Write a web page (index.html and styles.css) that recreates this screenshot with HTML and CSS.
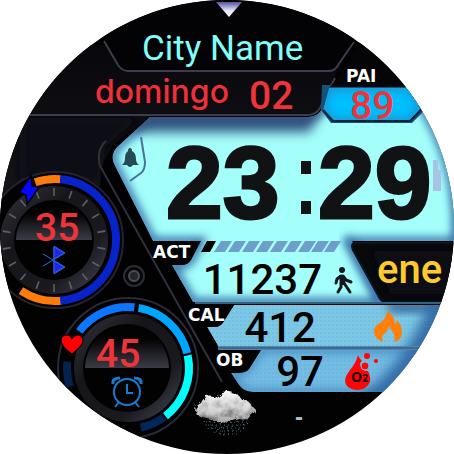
FILE: index.html
```
<!DOCTYPE html>
<html lang="es">
<head>
<meta charset="utf-8">
<meta name="viewport" content="width=device-width, initial-scale=1">
<title>Watch face</title>
<link rel="stylesheet" href="styles.css">
</head>
<body>
<main class="watch">
<svg class="face" viewBox="0 0 454 454" role="img" aria-label="Watch face">
  <defs>
    <clipPath id="dial"><circle cx="227" cy="227" r="227"/></clipPath>
    <path id="lcd-shape" d="M150 117H308Q317 117 322 109L328 104H460V241H352L382 302H193L172 265H182Q188 265 191 260L201 241H153L114 164Q110 155 117 147Z"/>
    <clipPath id="lcd"><use href="#lcd-shape"/></clipPath>
    <path id="cal-shape" d="M234 305H460V346H218L207 327H214Q221 327 224 321Z"/>
    <clipPath id="cal"><use href="#cal-shape"/></clipPath>
    <path id="ob-shape" d="M261 350H460V392H253Q244 392 239 385L231 373H237Q246 373 249 369Z"/>
    <clipPath id="ob"><use href="#ob-shape"/></clipPath>
    <path id="pai-shape" d="M329 88H412L420 109L410 121H333L323 110Z"/>
    <clipPath id="pai"><use href="#pai-shape"/></clipPath>
    <clipPath id="disc1"><circle cx="54" cy="240" r="38"/></clipPath>
    <clipPath id="disc2"><circle cx="127" cy="368" r="42"/></clipPath>
    <linearGradient id="band" x1="0" y1="0" x2="0" y2="1"><stop offset="0" stop-color="#08080c"/><stop offset="1" stop-color="#17171d"/></linearGradient>
    <linearGradient id="disc" x1="0" y1="0" x2="0" y2="1"><stop offset="0.3" stop-color="#030304"/><stop offset="1" stop-color="#3b3b46"/></linearGradient>
    <linearGradient id="bezel" x1="0" y1="0" x2="1" y2="1"><stop offset="0" stop-color="#34343e"/><stop offset="0.35" stop-color="#16161a"/><stop offset="0.7" stop-color="#19191e"/><stop offset="1" stop-color="#4a4a5c"/></linearGradient>
    <linearGradient id="seg" x1="0" y1="1" x2="1" y2="0"><stop offset="0" stop-color="#073a86"/><stop offset="0.35" stop-color="#0b76ff"/></linearGradient>
    <linearGradient id="marker" x1="0" y1="0" x2="0" y2="1"><stop offset="0" stop-color="#55549a"/><stop offset="0.6" stop-color="#e8ebff"/><stop offset="1" stop-color="#fff"/></linearGradient>
    <linearGradient id="cloud" x1="0" y1="0" x2="0" y2="1"><stop offset="0" stop-color="#f2f2f2"/><stop offset="0.6" stop-color="#b8b8b8"/><stop offset="1" stop-color="#666"/></linearGradient>
    <filter id="soft4" x="-20%" y="-50%" width="140%" height="200%"><feGaussianBlur stdDeviation="4"/></filter>
    <filter id="soft7" x="-20%" y="-80%" width="140%" height="260%"><feGaussianBlur stdDeviation="6"/></filter>
    <filter id="fluff" x="-10%" y="-10%" width="120%" height="120%">
      <feTurbulence type="fractalNoise" baseFrequency="0.12" numOctaves="4" seed="8" result="n"/>
      <feDisplacementMap in="SourceGraphic" in2="n" scale="7" result="d"/>
      <feColorMatrix in="n" type="matrix" values="1.7 0 0 0 -.1 1.7 0 0 0 -.1 1.7 0 0 0 -.1 0 0 0 0 1" result="g"/>
      <feBlend in="g" in2="d" mode="soft-light" result="b"/>
      <feComposite in="b" in2="d" operator="in"/>
    </filter>
    <pattern id="dots" width="4" height="4" patternUnits="userSpaceOnUse"><circle cx="1" cy="1" r="1" fill="#4288b4" opacity=".16"/></pattern>
  </defs>

  <g clip-path="url(#dial)">
    <rect width="454" height="454" fill="#020203"/>

    <!-- Header bands -->
    <path d="M0 45H105L119 67Q122 72 128 72H329Q334 72 338 66L348 48L334 78L320 109Q316 116 308 116H150L112 146L100 170V240H0Z" fill="url(#band)"/>
    <path d="M20 118H138L105 147L100 185H20Z" fill="#101015" filter="url(#soft4)"/>
    <path d="M80 0H375L338 66Q334 71 329 71H128Q122 71 118 66L104 41Z" fill="#030305"/>
    <path class="trim" d="M104 41L118 65Q122 71 128 71H329Q335 71 338 65L354 42"/>
    <path class="trim" d="M28 115H308Q316 115 320 108L335 78"/>
    <path d="M216 2H242L229 17Z" fill="url(#marker)"/>

    <!-- Main display -->
    <g clip-path="url(#lcd)">
      <use href="#lcd-shape" fill="#a4fffb"/>
      <use href="#lcd-shape" class="glow" filter="url(#soft4)"/>
      <path d="M120 104H324L310 132H130Z" fill="#33527f" filter="url(#soft7)"/>
      <path d="M346 238L380 302" class="glow" filter="url(#soft4)"/>
      <circle cx="227" cy="227" r="229" class="glow" filter="url(#soft4)"/>
    </g>
    <path d="M433 160H438V170H441V191H433Z" fill="#a9c3e4"/>
    <path d="M141 137L145 162Q145 170 141 173L130 181" fill="none" stroke="#48729a" stroke-width="2"/>
    <path d="M130 148Q132 148 132 151Q136 153 136 159Q136 163 139 165H133Q130 169 127 165H122Q125 163 125 158Q125 153 128 151Q128 148 130 148Z" fill="#244b54"/>

    <!-- PAI cell -->
    <path d="M322 85H420L426 109L412 123H331L321 110Z" fill="#17517a"/>
    <g clip-path="url(#pai)"><use href="#pai-shape" fill="#00bfff"/><use href="#pai-shape" class="edge" filter="url(#soft4)"/></g>
    <path d="M323 110L333 121H410L421 110" fill="none" stroke="#0c2335" stroke-width="2"/>
    <path d="M338 78L330 87H422L414 58L360 42Z" fill="#050507"/>

    <!-- Activity meter -->
    <path d="M207 241H216L210 252H201Z" fill="#000"/>
    <g fill="#6d9fc9">
      <path d="M221 241H232L225 252H214Z"/><path d="M235 241H246L239 252H228Z"/><path d="M249 241H260L253 252H242Z"/>
      <path d="M263 241H274L267 252H256Z"/><path d="M277 241H288L281 252H270Z"/><path d="M291 241H302L295 252H284Z"/>
      <path d="M305 241H316L309 252H298Z"/><path d="M318 241H329L322 252H311Z"/><path d="M331 241H341L334 252H324Z"/>
    </g>

    <!-- Month panel -->
    <path d="M356 243H454V302H386Q382 302 380 299L353 250Q350 243 356 243Z" fill="#08090b" stroke="#10141e" stroke-width="2"/>
    <path d="M372 251H454V294H391Z" fill="#111114" filter="url(#soft4)"/>

    <!-- Lower rows -->
    <path d="M195 303H450" stroke="#35627a" stroke-width="2"/>
    <g clip-path="url(#cal)">
      <use href="#cal-shape" fill="#7bc7e5"/><use href="#cal-shape" fill="url(#dots)"/>
      <path d="M384 303H454V312H392Z" fill="#315f92" filter="url(#soft4)"/>
      <circle cx="227" cy="227" r="231" class="glow wide" filter="url(#soft7)"/>
    </g>
    <path d="M218 348H440" stroke="#4f86ad" stroke-width="4"/>
    <path d="M218 348H440" stroke="#2d4f70" stroke-width="1"/>
    <g clip-path="url(#ob)">
      <use href="#ob-shape" fill="#73bce3"/><use href="#ob-shape" fill="url(#dots)"/>
      <use href="#ob-shape" class="edge" filter="url(#soft4)"/>
      <circle cx="227" cy="227" r="231" class="glow wide" filter="url(#soft7)"/>
    </g>

    <!-- Frame rail and screw -->
    <path d="M106 141Q96 150 100 166L222 382" fill="none" stroke="#30303f" stroke-width="2"/>
    <circle cx="134" cy="276" r="10" fill="#070708" stroke="#2c2c35" stroke-width="2"/>
    <circle cx="134" cy="276" r="5" fill="#25252c" stroke="#4b4b59" stroke-width="2"/>

    <!-- Battery gauge -->
    <circle cx="55" cy="240" r="68" fill="#020203" stroke="#24242d" stroke-width="2"/>
    <circle cx="54" cy="240" r="54" fill="url(#bezel)"/>
    <circle cx="54" cy="240" r="48" fill="none" stroke="#5c5c67" stroke-width="8" pathLength="360" stroke-dasharray="2 18" transform="rotate(-91 54 240)"/>
    <circle cx="54" cy="240" r="40" fill="#020203"/>
    <g clip-path="url(#disc1)"><rect x="16" y="202" width="76" height="38" fill="url(#disc)"/></g>
    <circle class="arc" cx="55" cy="240" r="61" stroke="#ff7b0a" pathLength="360" stroke-dasharray="24 336" transform="rotate(-109 55 240)"/>
    <circle class="arc" cx="55" cy="240" r="61" stroke="#ff7b0a" pathLength="360" stroke-dasharray="40 320" transform="rotate(84 55 240)"/>
    <circle class="arc" cx="55" cy="240" r="61" stroke="#0823c8" pathLength="360" stroke-dasharray="170 190" transform="rotate(-85 55 240)"/>
    <path d="M30 179L21 192L27 194L28 201L37 188L31 187Z" fill="none" stroke="#020203" stroke-width="4"/>
    <path d="M30 179L21 192L27 194L28 201L37 188L31 187Z" fill="#0707ff" stroke="#0707ff"/>
    <path d="M43 254L65 267L54 274V246L65 253L43 266" fill="none" stroke="#2867d8" stroke-width="1"/>
    <path d="M54 247L64 253L54 259ZM54 261L64 267L54 273Z" fill="#2222f5" stroke="#2867d8"/>

    <!-- Heart-rate gauge -->
    <circle cx="128" cy="368" r="70" fill="#020203" stroke="#2a2a35" stroke-width="2"/>
    <circle class="arc" cx="128" cy="368" r="61" stroke="url(#seg)" pathLength="360" stroke-dasharray="59 301" transform="rotate(-143 128 368)"/>
    <circle class="arc" cx="128" cy="368" r="61" stroke="#00a5ff" pathLength="360" stroke-dasharray="66 294" transform="rotate(-80 128 368)"/>
    <circle class="arc" cx="128" cy="368" r="61" stroke="#00ffff" pathLength="360" stroke-dasharray="64 296" transform="rotate(-12 128 368)"/>
    <circle class="arc" cx="128" cy="368" r="61" stroke="#03265a" pathLength="360" stroke-dasharray="24 336" transform="rotate(54 128 368)"/>
    <circle class="arc" cx="128" cy="368" r="61" stroke="#03224e" pathLength="360" stroke-dasharray="24 336" transform="rotate(162 128 368)"/>
    <circle cx="128" cy="368" r="54" fill="url(#bezel)"/>
    <circle cx="127" cy="368" r="44" fill="#020203"/>
    <g clip-path="url(#disc2)"><rect x="85" y="326" width="84" height="42" fill="url(#disc)"/></g>
    <path d="M72 354Q61 346 61 340Q62 335 67 335Q71 335 72 339Q74 335 78 335Q83 336 83 341Q83 345 72 354Z" fill="#ff0000" stroke="#020203" stroke-width="1"/>
    <g fill="none" stroke="#187bd2" stroke-width="2">
      <circle cx="127" cy="392" r="13"/><path d="M127 384V393H133M119 402L115 407M135 402L139 407"/>
      <path d="M113 384Q112 378 120 378M141 384Q142 378 134 378" stroke-width="3"/>
    </g>

    <!-- Walker -->
    <circle cx="342" cy="270" r="3" fill="#101a1d"/>
    <path d="M342 277L344 283L350 292M341 283L341 287L338 292M341 276L337 279L336 283M343 276L346 280L351 282" fill="none" stroke="#101a1d" stroke-width="3" stroke-linecap="round" stroke-linejoin="round"/>
    <path d="M339 275H344L345 285H340Z" fill="#101a1d"/>

    <!-- Flame -->
    <path d="M387 311Q394 314 395 324Q397 323 397 320Q402 326 402 332Q402 340 394 342Q396 336 392 331Q390 328 389 326Q388 331 384 334Q381 337 383 342Q374 339 374 331Q374 326 380 323Q387 318 387 311Z" fill="#ff7f08"/>

    <!-- Oxygen drop -->
    <path d="M358 355Q356 363 350 370Q342 380 347 386Q351 390 358 390Q367 389 370 382Q371 377 368 371Q361 371 360 364Q361 361 362 361Q359 358 358 355Z" fill="#fa0808"/>
    <g fill="#fa0808"><circle cx="367" cy="356" r="3"/><circle cx="376" cy="361" r="2"/><circle cx="365" cy="366" r="4" stroke="#73bce3" stroke-width="1"/></g>
    <text class="o2" x="351" y="382">O<tspan class="sub">2</tspan></text>

    <!-- Rain cloud -->
    <g filter="url(#fluff)"><path d="M196 414Q193 407 201 403Q204 395 214 397Q220 390 230 392Q240 394 242 400Q249 399 251 406Q257 408 254 413Q248 420 238 418Q229 422 219 420Q203 420 196 414Z" fill="url(#cloud)"/></g>
    <g fill="none" stroke="#5a8a9c" stroke-width="1" stroke-dasharray="1 3">
      <path d="M204 421L209 430M209 421L215 433M214 422L220 434M220 423L224 436M226 422L229 436M231 422L234 434M237 421L239 432M243 420L244 431M247 419L248 427"/>
      <path d="M206 422H247M208 425H248M211 428H246M216 431H243M220 434H238" opacity=".7"/>
    </g>

    <!-- Readouts -->
    <text class="city" x="142" y="60">City Name</text>
    <text class="day" x="95" y="103">domingo</text>
    <text class="value" x="249" y="109">02</text>
    <text class="label" x="346" y="82">PAI</text>
    <text class="value" x="350" y="119">89</text>
    <text class="time" x="166" y="218">23</text>
    <path d="M301 161H311V174H301ZM301 201H311V214H301Z" fill="#101214"/>
    <text class="time" x="318" y="218">29</text>
    <text class="label" x="153" y="258">ACT</text>
    <text class="count" x="322" y="294">11237</text>
    <text class="month" x="377" y="283">ene</text>
    <text class="label" x="188" y="321">CAL</text>
    <text class="count" x="316" y="342">412</text>
    <text class="label" x="216" y="366">OB</text>
    <text class="count" x="324" y="386">97</text>
    <text class="value" x="35" y="241">35</text>
    <text class="value" x="96" y="367">45</text>
    <text class="temp" x="295" y="425">-</text>
  </g>
</svg>
</main>
</body>
</html>
```
FILE: styles.css
```
body {
  margin: 0;
  background: #fff;
}
.watch {
  display: flex;
  justify-content: center;
}
.face {
  display: block;
  width: 100%;
  max-height: 100vh;
}
.trim {
  fill: none;
  stroke: #3c3c4c;
  stroke-width: 2px;
}
.glow {
  fill: none;
  stroke: #346da8;
  stroke-width: 8px;
}
.wide {
  stroke-width: 30px;
}
.edge {
  fill: none;
  stroke: #3172b0;
  stroke-width: 4px;
}
.arc {
  fill: none;
  stroke-width: 8px;
}
.city {
  font: 400 35px Roboto, sans-serif;
  fill: #80fffa;
}
.day {
  font: 500 32px Inter, sans-serif;
  fill: #ef3038;
}
.value {
  font: 500 39px Roboto, sans-serif;
  fill: #ee3439;
}
.count {
  font: 500 42px Roboto, sans-serif;
  fill: #000;
  text-anchor: end;
}
.time {
  font: 700 102px "Liberation Sans", sans-serif;
  fill: #101214;
  stroke: #101214;
  stroke-width: 3px;
}
.label {
  font: 700 17px "DejaVu Sans", sans-serif;
  fill: #fff;
}
.month {
  font: 500 40px Roboto, sans-serif;
  fill: #ffca2c;
}
.o2 {
  font: 700 14px "Open Sans", sans-serif;
  fill: #160000;
}
.sub {
  font-size: 10px;
}
.temp {
  font: 700 24px "Liberation Sans", sans-serif;
  fill: #a9c6cd;
}
```
